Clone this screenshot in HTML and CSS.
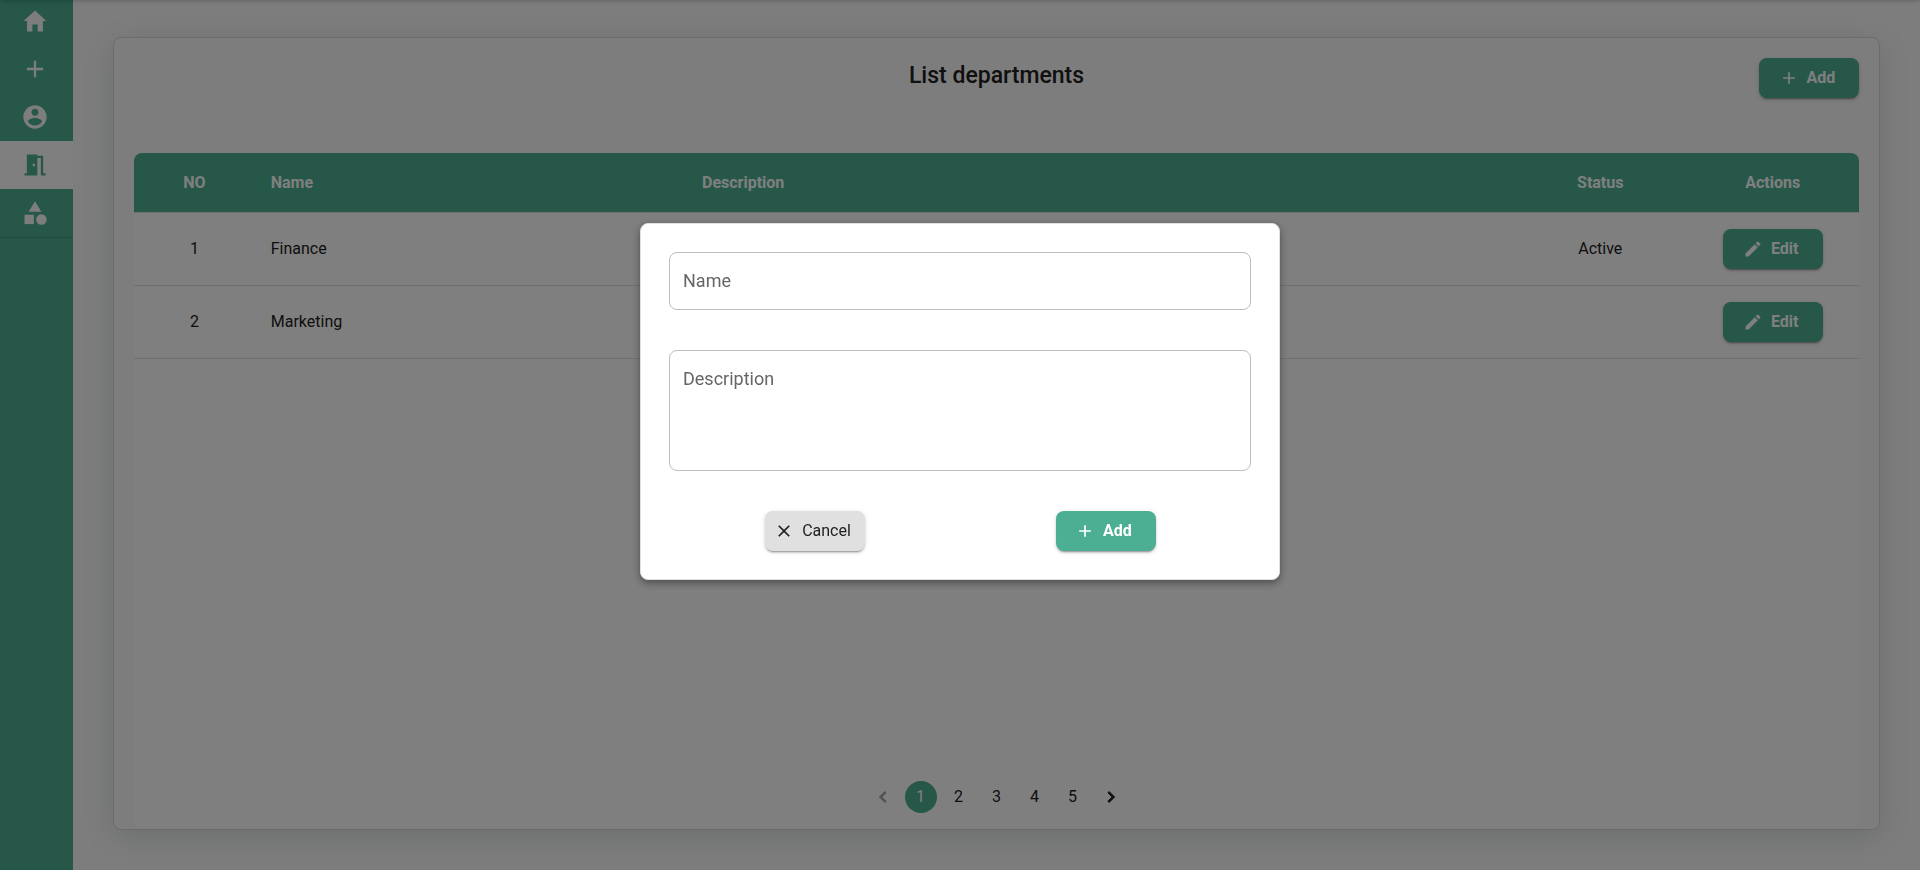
FILE: index.html
```html
<!DOCTYPE html>
<html lang="en">
<head>
<meta charset="utf-8">
<title>List departments</title>
<link rel="stylesheet" href="styles.css">
</head>
<body>
<svg class="sprite" aria-hidden="true">
  <symbol id="i-home" viewBox="0 0 512 512"><path d="M208 448V320h96v128h97.600V256H464L256 64 48 256h62.400v192z"/></symbol>
  <symbol id="i-add" viewBox="0 0 24 24"><path d="M19 13h-6v6h-2v-6H5v-2h6V5h2v6h6v2z"/></symbol>
  <symbol id="i-user" viewBox="0 0 24 24"><path d="M12 2C6.48 2 2 6.48 2 12s4.48 10 10 10 10-4.48 10-10S17.52 2 12 2zm0 3c1.66 0 3 1.34 3 3s-1.34 3-3 3-3-1.34-3-3 1.34-3 3-3zm0 14.200c-2.500 0-4.710-1.280-6-3.220.030-1.990 4-3.080 6-3.080 1.990 0 5.970 1.090 6 3.080-1.290 1.940-3.500 3.220-6 3.220z"/></symbol>
  <symbol id="i-door" viewBox="0 0 24 24"><path d="M14 6v15H3v-2h2V3h9v1h5v15h2v2h-4V6h-3zm-4 5v2h2v-2h-2z"/></symbol>
  <symbol id="i-category" viewBox="0 0 24 24"><path d="M12 2l-5.500 9h11z"/><circle cx="17.500" cy="17.500" r="4.500"/><path d="M3 13.500h8v8H3z"/></symbol>
  <symbol id="i-edit" viewBox="0 0 24 24"><path d="M3 17.250V21h3.750L17.810 9.940l-3.750-3.750L3 17.250zM20.710 7.040c.390-.390.390-1.020 0-1.410l-2.340-2.340a.996.996 0 0 0-1.410 0l-1.830 1.830 3.750 3.750 1.830-1.830z"/></symbol>
  <symbol id="i-close" viewBox="0 0 24 24"><path d="M19 6.410 17.590 5 12 10.590 6.410 5 5 6.410 10.590 12 5 17.590 6.410 19 12 13.410 17.590 19 19 17.590 13.410 12z"/></symbol>
  <symbol id="i-prev" viewBox="0 0 24 24"><path d="M15.410 7.410 14 6l-6 6 6 6 1.410-1.410L10.830 12z"/></symbol>
  <symbol id="i-next" viewBox="0 0 24 24"><path d="M10 6 8.590 7.410 13.170 12l-4.580 4.590L10 18l6-6z"/></symbol>
</svg>

<div class="appbar" aria-hidden="true"></div>

<div class="app">
  <aside class="sidebar">
    <nav class="menu">
      <a class="menu-item" href="#" aria-label="Home"><svg><use href="#i-home"/></svg></a>
      <a class="menu-item" href="#" aria-label="Add"><svg><use href="#i-add"/></svg></a>
      <a class="menu-item" href="#" aria-label="Account"><svg><use href="#i-user"/></svg></a>
      <a class="menu-item active" href="#" aria-label="Departments"><svg><use href="#i-door"/></svg></a>
      <a class="menu-item" href="#" aria-label="Categories"><svg><use href="#i-category"/></svg></a>
    </nav>
  </aside>

  <main class="main">
    <section class="panel">
      <header class="panel-head">
        <h1 class="title">List departments</h1>
        <button class="btn" type="button"><svg><use href="#i-add"/></svg>Add</button>
      </header>
      <div class="panel-body">
        <table class="table">
          <thead>
            <tr>
              <th class="col-no center">NO</th>
              <th class="col-name">Name</th>
              <th class="col-desc">Description</th>
              <th class="col-status center">Status</th>
              <th class="col-actions center">Actions</th>
            </tr>
          </thead>
          <tbody>
            <tr>
              <td class="center">1</td>
              <td>Finance</td>
              <td></td>
              <td class="center">Active</td>
              <td class="center"><button class="btn" type="button"><svg><use href="#i-edit"/></svg>Edit</button></td>
            </tr>
            <tr>
              <td class="center">2</td>
              <td>Marketing</td>
              <td></td>
              <td class="center"></td>
              <td class="center"><button class="btn" type="button"><svg><use href="#i-edit"/></svg>Edit</button></td>
            </tr>
          </tbody>
        </table>
        <nav class="pagination" aria-label="Pages">
          <button class="page" type="button" disabled aria-label="Previous page"><svg><use href="#i-prev"/></svg></button>
          <button class="page current" type="button">1</button>
          <button class="page" type="button">2</button>
          <button class="page" type="button">3</button>
          <button class="page" type="button">4</button>
          <button class="page" type="button">5</button>
          <button class="page" type="button" aria-label="Next page"><svg><use href="#i-next"/></svg></button>
        </nav>
      </div>
    </section>
  </main>
</div>

<div class="backdrop">
  <form class="modal" role="dialog" aria-modal="true" aria-label="Add department">
    <div class="field">
      <label for="name">Name</label>
      <input id="name" type="text">
    </div>
    <div class="field">
      <label for="description">Description</label>
      <textarea id="description"></textarea>
    </div>
    <div class="modal-actions">
      <button class="btn btn-grey" type="button"><svg><use href="#i-close"/></svg>Cancel</button>
      <button class="btn" type="submit"><svg><use href="#i-add"/></svg>Add</button>
    </div>
  </form>
</div>
</body>
</html>
```
FILE: styles.css
```css
:root {
  --green: #4caf93;
  --line: #e0e0e0;
}

* {
  box-sizing: border-box;
}

body {
  margin: 0;
  background: #fafafa;
  color: #212121;
  font: 400 16px/24px Roboto, "Liberation Sans", sans-serif;
  overflow: hidden;
}

svg {
  fill: currentColor;
  flex: none;
}

.sprite {
  display: none;
}

.appbar {
  position: fixed;
  top: -67px;
  left: 0;
  right: 0;
  height: 64px;
  z-index: 1;
  box-shadow: 0 2px 4px -1px rgba(0, 0, 0, .2), 0 4px 5px rgba(0, 0, 0, .14), 0 1px 10px rgba(0, 0, 0, .12);
}

.app {
  display: flex;
  min-height: 100vh;
}

.sidebar {
  width: 73px;
  flex: none;
  background: var(--green);
  overflow: hidden;
}

.menu {
  margin-top: -3px;
  border-bottom: 1px solid rgba(0, 0, 0, .12);
}

.menu-item {
  display: flex;
  align-items: center;
  height: 48px;
  padding-left: 21px;
  color: #fafafa;
}

.menu-item svg {
  width: 28px;
  height: 28px;
}

.menu-item.active {
  background: #fff;
  color: var(--green);
}

.main {
  flex: 1;
  display: flex;
  padding: 37px 40px 40px;
}

.panel {
  flex: 1;
  display: flex;
  flex-direction: column;
  padding: 20px 20px 0;
  background: #fafafa;
  border: 1px solid #d6d8d8;
  border-radius: 8px;
  box-shadow: 0 7px 29px rgba(90, 110, 115, .2);
}

.panel-head {
  display: grid;
  grid-template-columns: 1fr auto 1fr;
  margin-bottom: 55px;
}

.panel-head .btn {
  grid-column: 3;
  justify-self: end;
}

.title {
  grid-column: 2;
  margin: 0;
  font-size: 23px;
  font-weight: 500;
  line-height: 36px;
}

.panel-body {
  flex: 1;
  display: flex;
  flex-direction: column;
  background: #fff;
  border-radius: 8px;
}

.table {
  width: 100%;
  border-collapse: separate;
  border-spacing: 0;
  table-layout: fixed;
}

.table th,
.table td {
  padding: 16px;
  text-align: left;
  border-bottom: 1px solid var(--line);
}

.table th {
  height: 60px;
  background: var(--green);
  background-clip: padding-box;
  color: #fff;
  font-weight: 700;
}

.table th:first-child {
  border-top-left-radius: 8px;
}

.table th:last-child {
  border-top-right-radius: 8px;
}

.table .center {
  text-align: center;
}

.col-no {
  width: 7%;
}

.col-name {
  width: 25%;
}

.col-status,
.col-actions {
  width: 10%;
}

.table td .btn {
  vertical-align: top;
}

.btn {
  display: inline-flex;
  align-items: center;
  justify-content: center;
  gap: 8px;
  width: 100px;
  height: 40px;
  padding: 0 4px 0 0;
  border: 0;
  border-radius: 8px;
  background: var(--green);
  color: #fff;
  font: 700 16px/24px Roboto, "Liberation Sans", sans-serif;
  box-shadow: 0 3px 1px -2px rgba(0, 0, 0, .2), 0 2px 2px rgba(0, 0, 0, .14), 0 1px 5px rgba(0, 0, 0, .12);
}

.btn svg {
  width: 20px;
  height: 20px;
}

.btn-grey {
  background: var(--line);
  color: #212121;
  font-weight: 400;
}

.pagination {
  display: flex;
  justify-content: center;
  gap: 6px;
  margin-top: auto;
  padding-bottom: 16px;
}

.page {
  display: flex;
  align-items: center;
  justify-content: center;
  width: 32px;
  height: 32px;
  padding: 0;
  border: 0;
  border-radius: 50%;
  background: none;
  color: #212121;
  font: 400 16px/24px Roboto, "Liberation Sans", sans-serif;
}

.page svg {
  width: 22px;
  height: 22px;
  stroke: currentColor;
}

.page:disabled {
  opacity: .4;
}

.page.current {
  background: var(--green);
  color: #fff;
}

.backdrop {
  position: fixed;
  inset: 0;
  z-index: 2;
  display: flex;
  align-items: center;
  justify-content: center;
  padding-bottom: 67px;
  background: rgba(0, 0, 0, .5);
}

.modal {
  width: 640px;
  max-width: 100%;
  padding: 28px;
  background: #fff;
  border: 1px solid var(--line);
  border-radius: 8px;
  box-shadow: 0 3px 8px rgba(0, 0, 0, .4);
}

.field {
  position: relative;
  display: flex;
  margin-bottom: 40px;
}

.field label {
  position: absolute;
  top: 17px;
  left: 14px;
  color: #666;
  font-size: 18px;
}

.field input,
.field textarea {
  width: 100%;
  height: 58px;
  padding: 16px 14px;
  border: 1px solid #bdbdbd;
  border-radius: 8px;
  background: none;
  color: inherit;
  font: 400 18px/24px Roboto, "Liberation Sans", sans-serif;
  resize: none;
}

.field textarea {
  height: 121px;
}

.modal-actions {
  display: flex;
  justify-content: space-around;
}
```
